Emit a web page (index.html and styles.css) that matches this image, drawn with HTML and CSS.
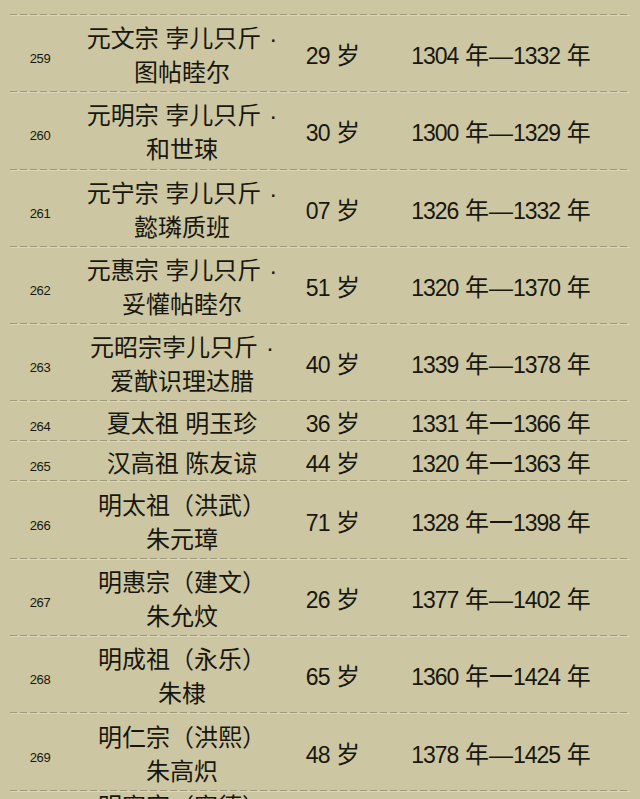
FILE: index.html
```html
<!DOCTYPE html>
<html lang="zh-CN">
<head>
<meta charset="utf-8">
<title>帝王年表</title>
<link rel="stylesheet" href="styles.css">
</head>
<body>
<div class="table">
  <div class="row double">
    <div class="no">259</div>
    <div class="name">元文宗 孛儿只斤<span class="dot">·</span><br>图帖睦尔</div>
    <div class="age"><span class="d">29</span> 岁</div>
    <div class="years"><span class="d">1304</span> 年—<span class="d">1332</span> 年</div>
  </div>
  <div class="row double">
    <div class="no">260</div>
    <div class="name">元明宗 孛儿只斤<span class="dot">·</span><br>和世㻋</div>
    <div class="age"><span class="d">30</span> 岁</div>
    <div class="years"><span class="d">1300</span> 年—<span class="d">1329</span> 年</div>
  </div>
  <div class="row double">
    <div class="no">261</div>
    <div class="name">元宁宗 孛儿只斤<span class="dot">·</span><br>懿璘质班</div>
    <div class="age"><span class="d">07</span> 岁</div>
    <div class="years"><span class="d">1326</span> 年—<span class="d">1332</span> 年</div>
  </div>
  <div class="row double">
    <div class="no">262</div>
    <div class="name">元惠宗 孛儿只斤<span class="dot">·</span><br>妥懽帖睦尔</div>
    <div class="age"><span class="d">51</span> 岁</div>
    <div class="years"><span class="d">1320</span> 年—<span class="d">1370</span> 年</div>
  </div>
  <div class="row double">
    <div class="no">263</div>
    <div class="name">元昭宗孛儿只斤<span class="dot">·</span><br>爱猷识理达腊</div>
    <div class="age"><span class="d">40</span> 岁</div>
    <div class="years"><span class="d">1339</span> 年—<span class="d">1378</span> 年</div>
  </div>
  <div class="row single">
    <div class="no">264</div>
    <div class="name">夏太祖 明玉珍</div>
    <div class="age"><span class="d">36</span> 岁</div>
    <div class="years"><span class="d">1331</span> 年一<span class="d">1366</span> 年</div>
  </div>
  <div class="row single">
    <div class="no">265</div>
    <div class="name">汉高祖 陈友谅</div>
    <div class="age"><span class="d">44</span> 岁</div>
    <div class="years"><span class="d">1320</span> 年一<span class="d">1363</span> 年</div>
  </div>
  <div class="row double">
    <div class="no">266</div>
    <div class="name">明太祖（洪武）<br>朱元璋</div>
    <div class="age"><span class="d">71</span> 岁</div>
    <div class="years"><span class="d">1328</span> 年一<span class="d">1398</span> 年</div>
  </div>
  <div class="row double">
    <div class="no">267</div>
    <div class="name">明惠宗（建文）<br>朱允炆</div>
    <div class="age"><span class="d">26</span> 岁</div>
    <div class="years"><span class="d">1377</span> 年—<span class="d">1402</span> 年</div>
  </div>
  <div class="row double">
    <div class="no">268</div>
    <div class="name">明成祖（永乐）<br>朱棣</div>
    <div class="age"><span class="d">65</span> 岁</div>
    <div class="years"><span class="d">1360</span> 年一<span class="d">1424</span> 年</div>
  </div>
  <div class="row double">
    <div class="no">269</div>
    <div class="name">明仁宗（洪熙）<br>朱高炽</div>
    <div class="age"><span class="d">48</span> 岁</div>
    <div class="years"><span class="d">1378</span> 年—<span class="d">1425</span> 年</div>
  </div>
  <div class="row double last">
    <div class="no">270</div>
    <div class="name">明宣宗（宣德）<br>朱瞻基</div>
    <div class="age"><span class="d">38</span> 岁</div>
    <div class="years"><span class="d">1399</span> 年—<span class="d">1435</span> 年</div>
  </div>
</div>
</body>
</html>
```

FILE: styles.css
```css
html, body {
  margin: 0;
  padding: 0;
}

body {
  background: #cdc6a2;
  color: #18170f;
  font-family: "Liberation Sans", "Noto Sans CJK SC", sans-serif;
  height: 799px;
  overflow: hidden;
}

.table {
  padding: 14px 10px 0;
}

.row {
  display: grid;
  grid-template-columns: 60px 224px 78px 1fr;
  align-items: center;
  box-sizing: border-box;
  height: 77.3px;
  padding-top: 7px;
  background-image:
    repeating-linear-gradient(90deg, #9f997e 0 7px, transparent 7px 10px),
    linear-gradient(#dcd6b9, #dcd6b9);
  background-size: 100% 1px, 100% 1px;
  background-position: 0 0, 0 1px;
  background-repeat: no-repeat;
}

.row.single {
  height: 40px;
}

.row.last {
  padding-top: 0;
}

.row.last .name {
  align-self: start;
}

.no {
  font-size: 13px;
  line-height: 20px;
  text-align: center;
  padding-top: 6px;
  letter-spacing: -0.4px;
}

.name,
.age,
.years {
  font-size: 24px;
  line-height: 34px;
  text-align: center;
}

.dot {
  margin-left: 8px;
}

.d {
  font-size: 23px;
  letter-spacing: -1px;
}
```
